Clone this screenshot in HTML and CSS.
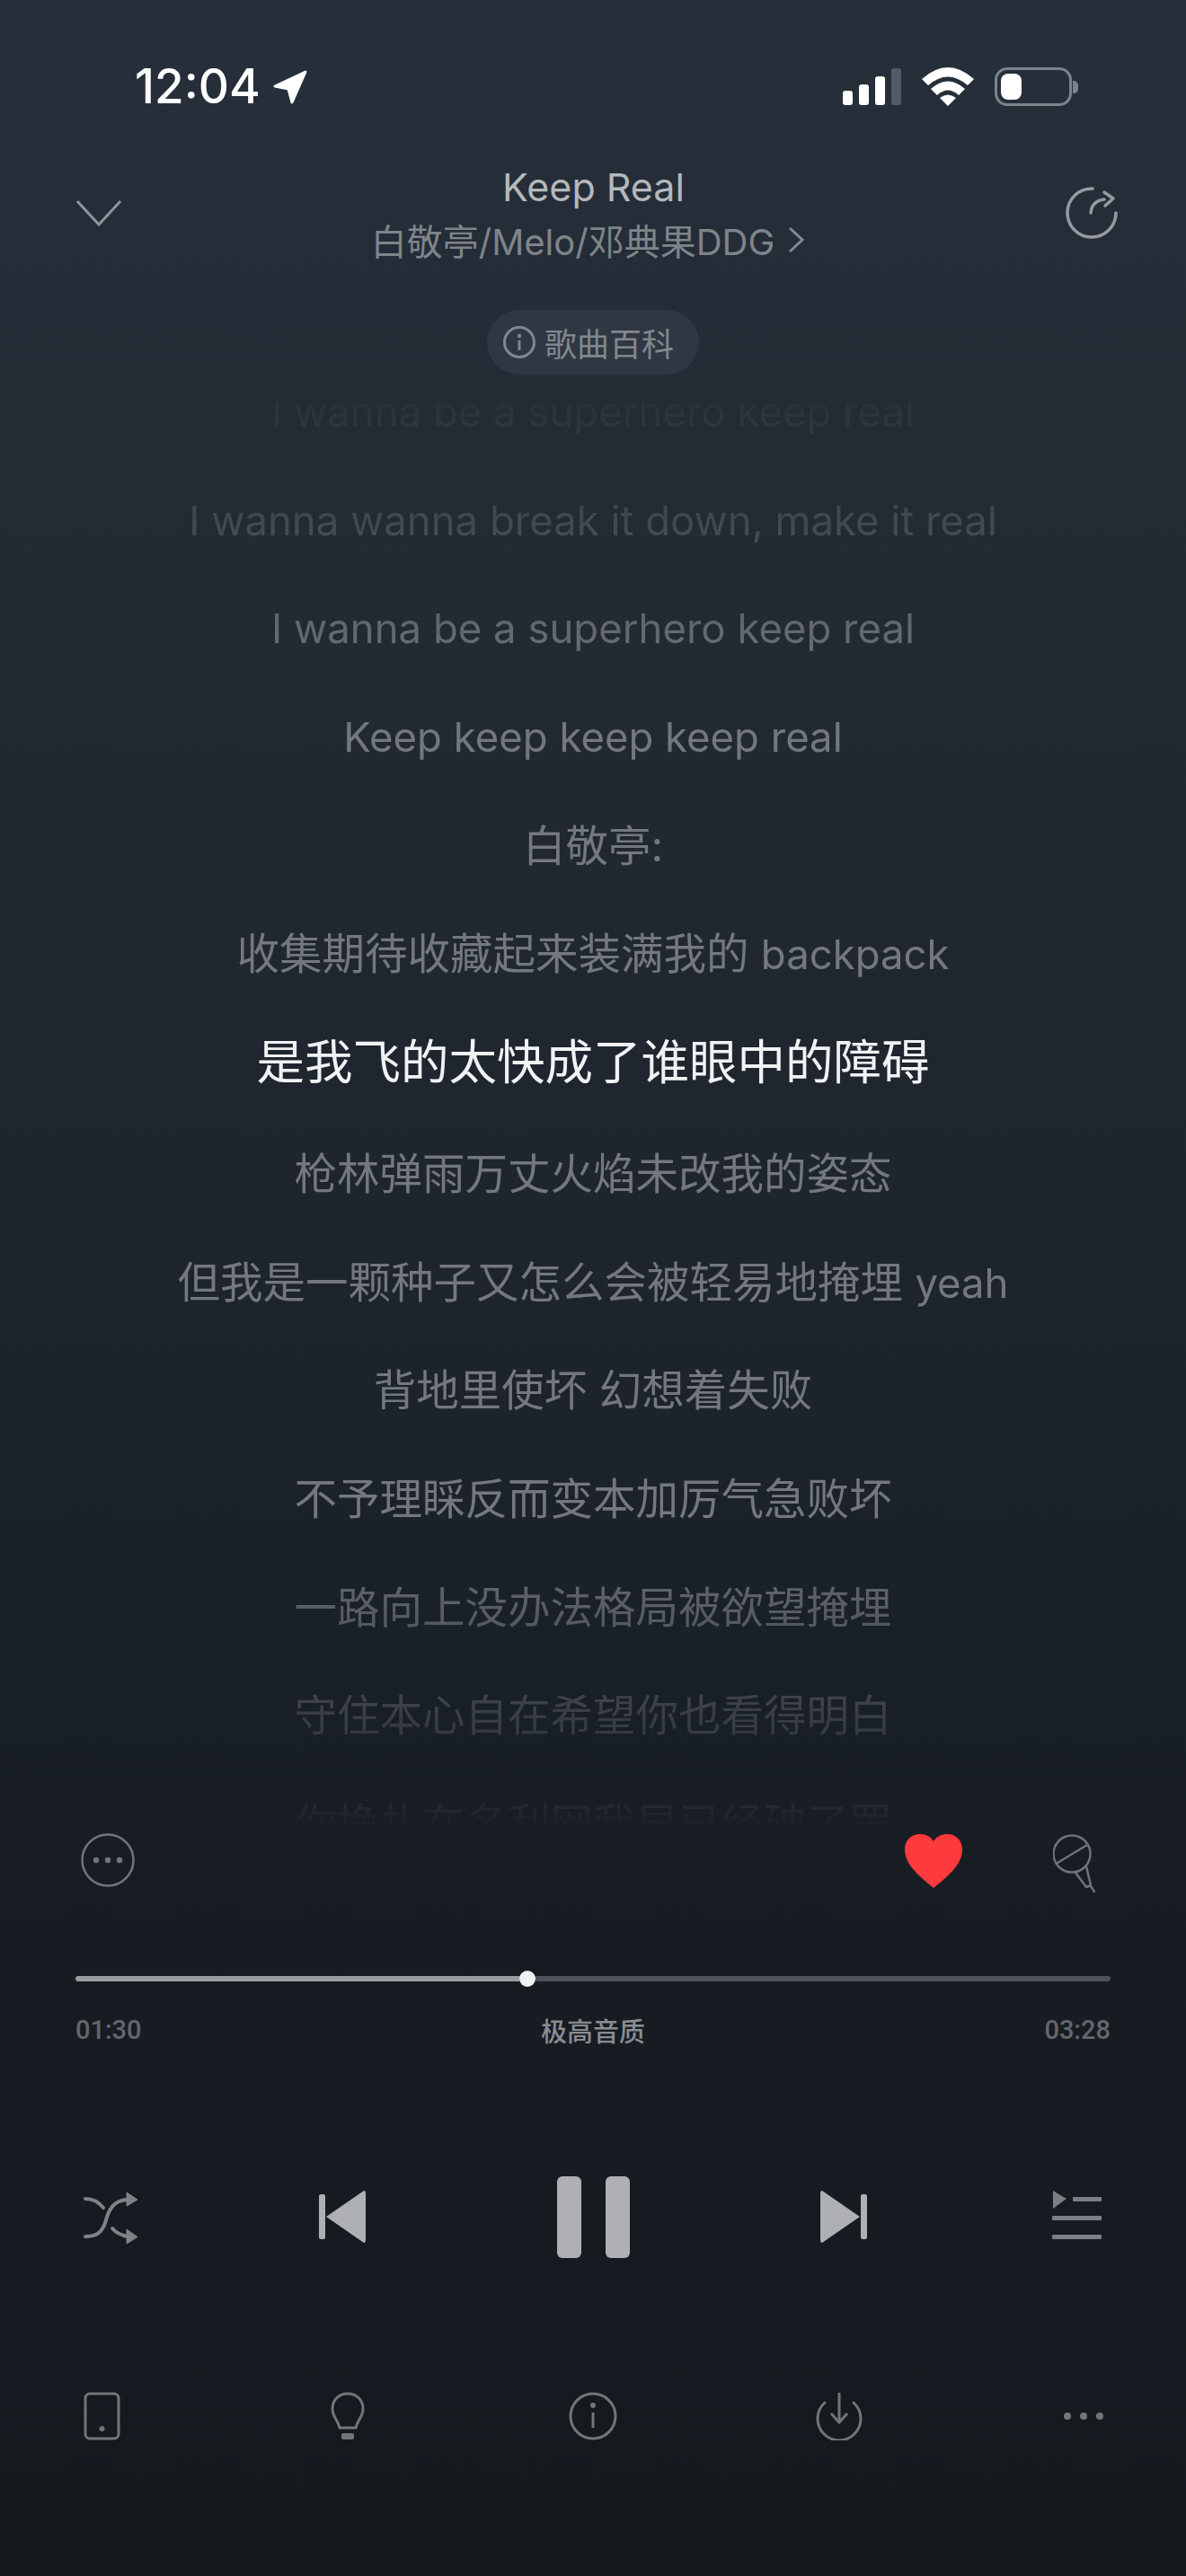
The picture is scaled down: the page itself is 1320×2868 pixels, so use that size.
FILE: index.html
```html
<!DOCTYPE html>
<html>
  <head>
    <meta name="viewport" content="width=device-width, initial-scale=1.0" />
    <title>Keep Real</title>
    <link rel="stylesheet" href="styles.css">
  </head>

  <body>
    <div class="screen">
      <!--status bar-->
      <div class="status-bar">
        <div class="status-left">
          <span class="clock">12:04</span>
          <svg class="location" width="40" height="40" viewBox="0 0 40 40"><path d="M37 3 L3 19 L18 22 L22 37 Z" fill="#fff" stroke="#fff" stroke-width="3" stroke-linejoin="round"/></svg>
        </div>
        <div class="status-right">
          <div class="signal">
            <span class="bar bar-1"></span>
            <span class="bar bar-2"></span>
            <span class="bar bar-3"></span>
            <span class="bar bar-4"></span>
          </div>
          <svg class="wifi" width="58" height="43" viewBox="0 0 58 43"><path d="M0 13 Q29 -13 58 13 L51 20 Q29 1 7 20 Z" fill="#fff"/><path d="M10 24 Q29 7 48 24 L41 31 Q29 20 17 31 Z" fill="#fff"/><path d="M20 34 Q29 27 38 34 L29 43 Z" fill="#fff"/></svg>
          <div class="battery">
            <div class="battery-body"><span class="battery-level"></span></div>
            <span class="battery-nub"></span>
          </div>
        </div>
      </div>

      <!--song header-->
      <div class="song-header">
        <svg class="header-icon" width="52" height="30" viewBox="0 0 52 30"><path d="M2 2 L26 28 L50 2" fill="none" stroke="#8f949a" stroke-width="3"/></svg>
        <div class="song-info">
          <div class="song-title">Keep Real</div>
          <div class="song-artist">
            <span>白敬亭/Melo/邓典果DDG</span>
            <svg width="20" height="30" viewBox="0 0 20 30"><path d="M3 2 L17 15 L3 28" fill="none" stroke="#84898f" stroke-width="3"/></svg>
          </div>
        </div>
        <svg class="header-icon" width="60" height="60" viewBox="0 0 60 60"><path d="M31 3 A27 27 0 1 0 57 30" fill="none" stroke="#969a9f" stroke-width="3.5" stroke-linecap="round"/><path d="M29 30 Q30 17 44 15 M44 7 L54 14 L45 22" fill="none" stroke="#969a9f" stroke-width="3.5" stroke-linecap="round" stroke-linejoin="round"/></svg>
      </div>

      <div class="wiki-row">
        <div class="wiki-pill">
          <svg width="38" height="38" viewBox="0 0 38 38"><circle cx="19" cy="19" r="16.5" fill="none" stroke="#82878e" stroke-width="3"/><circle cx="19" cy="12" r="2.2" fill="#82878e"/><path d="M19 17 V28" stroke="#82878e" stroke-width="3"/></svg>
          <span>歌曲百科</span>
        </div>
      </div>

      <!--lyrics-->
      <div class="lyrics">
        <div class="lyric-line latin">I wanna be a superhero keep real</div>
        <div class="lyric-line latin">I wanna wanna break it down, make it real</div>
        <div class="lyric-line latin">I wanna be a superhero keep real</div>
        <div class="lyric-line latin">Keep keep keep keep real</div>
        <div class="lyric-line">白敬亭:</div>
        <div class="lyric-line">收集期待收藏起来装满我的 <span class="latin">backpack</span></div>
        <div class="lyric-line current">是我飞的太快成了谁眼中的障碍</div>
        <div class="lyric-line">枪林弹雨万丈火焰未改我的姿态</div>
        <div class="lyric-line">但我是一颗种子又怎么会被轻易地掩埋 <span class="latin">yeah</span></div>
        <div class="lyric-line">背地里使坏 幻想着失败</div>
        <div class="lyric-line">不予理睬反而变本加厉气急败坏</div>
        <div class="lyric-line">一路向上没办法格局被欲望掩埋</div>
        <div class="lyric-line">守住本心自在希望你也看得明白</div>
        <div class="lyric-line">你挣扎在名利网我早已经破了罢</div>
      </div>

      <!--like, comment etc-->
      <div class="action-row">
        <svg width="60" height="60" viewBox="0 0 60 60"><circle cx="30" cy="30" r="28.5" fill="none" stroke="#72767b" stroke-width="2.5"/><circle cx="17" cy="30" r="3.2" fill="#72767b"/><circle cx="30" cy="30" r="3.2" fill="#72767b"/><circle cx="43" cy="30" r="3.2" fill="#72767b"/></svg>
        <svg class="heart" width="64" height="60" viewBox="0 0 64 60"><path d="M32 60 C12 44 0 32 0 17 C0 6 8 0 17 0 C24 0 29 3 32 8 C35 3 40 0 47 0 C56 0 64 6 64 17 C64 32 52 44 32 60 Z" fill="#fd3a3c"/></svg>
        <svg class="mic" width="48" height="66" viewBox="0 0 48 66"><circle cx="21" cy="23" r="20.5" fill="none" stroke="#6f7276" stroke-width="2.5"/><path d="M5 33 L38 13 M25 44 L37 60 L42 58 L37 37 M42 59 L46 65" fill="none" stroke="#6f7276" stroke-width="2.5" stroke-linecap="round" stroke-linejoin="round"/></svg>
      </div>

      <!--progress-->
      <div class="progress">
        <div class="progress-fill"></div>
        <div class="progress-thumb"></div>
        <div class="progress-rest"></div>
      </div>
      <div class="progress-labels">
        <span>01:30</span>
        <span class="quality">极高音质</span>
        <span>03:28</span>
      </div>

      <!--player controls-->
      <div class="controls">
        <svg width="60" height="60" viewBox="0 0 60 60"><path d="M2 9 Q14 9 22 19 M2 51 C14 51 20 47 24 36 C28 20 34 11 48 10 M32 42 Q38 49 49 51" fill="none" stroke="#7f8387" stroke-width="4" stroke-linecap="round"/><path d="M48 2 L60 10 L48 17 Z M48 43 L60 51.5 L48 59 Z" fill="#7f8387" stroke="#7f8387" stroke-width="1" stroke-linejoin="round"/></svg>
        <svg width="60" height="60" viewBox="0 0 60 60"><rect x="4" y="4" width="7" height="50" rx="2" fill="#aeb0b3"/><path d="M12 29 L54 0 Q56 0 56 4 V54 Q56 58 54 58 Z" fill="#aeb0b3"/></svg>
        <div class="pause">
          <span class="pause-bar"></span>
          <span class="pause-bar"></span>
        </div>
        <svg width="60" height="60" viewBox="0 0 60 60"><rect x="49" y="4" width="7" height="50" rx="2" fill="#aeb0b3"/><path d="M48 29 L6 0 Q4 0 4 4 V54 Q4 58 6 58 Z" fill="#aeb0b3"/></svg>
        <svg width="60" height="60" viewBox="0 0 60 60"><path d="M5 0 L20 9 L5 20 Z" fill="#7b7f84"/><rect x="27" y="7" width="32" height="5" rx="1" fill="#7b7f84"/><rect x="4" y="28" width="55" height="5" rx="1" fill="#7b7f84"/><rect x="4" y="49" width="55" height="5" rx="1" fill="#7b7f84"/></svg>
      </div>

      <!--bottom row-->
      <div class="tool-row">
        <svg width="60" height="54" viewBox="0 0 60 54"><rect x="11" y="2" width="37" height="50" rx="5" fill="none" stroke="#72767b" stroke-width="3"/><circle cx="29.5" cy="41" r="3" fill="#72767b"/></svg>
        <svg width="60" height="54" viewBox="0 0 60 54"><path d="M30 2 C20 2 13 9 13 19 C13 28 19 31 21 40 H39 C41 31 47 28 47 19 C47 9 40 2 30 2 Z" fill="none" stroke="#72767b" stroke-width="3"/><rect x="23" y="46" width="14" height="7" rx="2" fill="#72767b"/></svg>
        <svg width="60" height="54" viewBox="0 0 60 54"><circle cx="30" cy="27" r="25" fill="none" stroke="#72767b" stroke-width="3"/><circle cx="30" cy="15" r="3" fill="#72767b"/><path d="M30 23 V40" stroke="#72767b" stroke-width="3"/></svg>
        <svg width="60" height="54" viewBox="0 0 60 54"><path d="M15 12 A24 24 0 1 0 47 12" fill="none" stroke="#72767b" stroke-width="3" stroke-linecap="round"/><path d="M31 1 V32 M22 24 L31 34 L40 24" fill="none" stroke="#72767b" stroke-width="3"/></svg>
        <svg width="60" height="54" viewBox="0 0 60 54"><circle cx="12" cy="27" r="4" fill="#72767b"/><circle cx="30" cy="27" r="4" fill="#72767b"/><circle cx="48" cy="27" r="4" fill="#72767b"/></svg>
      </div>
    </div>
  </body>
</html>
```

FILE: styles.css
```css
* {
  box-sizing: border-box;
}

body {
  margin: 0;
  font-family: Inter, "Noto Sans CJK SC", sans-serif;
}

svg {
  display: block;
  flex: none;
}

/*whole phone screen:*/
.screen {
  width: 1320px;
  height: 2868px;
  overflow: hidden;
  display: flex;
  flex-direction: column;
  background: linear-gradient(180deg, #262f3a 0%, #232b35 18%, #1c232b 55%, #181d24 72%, #14191e 100%);
}

/*status bar:*/
.status-bar {
  display: flex;
  justify-content: space-between;
  align-items: center;
  height: 43px;
  margin-top: 75px;
  padding: 0 120px 0 150px;
}

.status-left {
  display: flex;
  align-items: center;
  gap: 13px;
}

.clock {
  color: #fff;
  font-size: 53px;
  font-weight: 500;
  line-height: 43px;
}

.status-right {
  display: flex;
  align-items: center;
  gap: 23px;
}

.signal {
  display: flex;
  align-items: flex-end;
  gap: 7px;
  height: 41px;
}

.bar {
  width: 11px;
  border-radius: 3px;
  background-color: #fff;
}

.bar-1 {
  height: 16px;
}

.bar-2 {
  height: 23px;
}

.bar-3 {
  height: 32px;
}

.bar-4 {
  height: 41px;
  background-color: #535c66;
}

.battery {
  display: flex;
  align-items: center;
  gap: 1px;
}

.battery-body {
  width: 86px;
  height: 43px;
  padding: 4px;
  border: 3px solid #7c838b;
  border-radius: 14px;
}

.battery-level {
  display: block;
  width: 23px;
  height: 100%;
  border-radius: 8px;
  background-color: #fff;
}

.battery-nub {
  width: 6px;
  height: 14px;
  border-radius: 0 5px 5px 0;
  background-color: #7c838b;
}

/*song header:*/
.song-header {
  display: flex;
  justify-content: space-between;
  align-items: center;
  height: 110px;
  margin-top: 67px;
  padding: 0 75px 0 84px;
}

.header-icon {
  margin-bottom: 6px;
}

.song-info {
  display: flex;
  flex-direction: column;
  align-items: center;
  gap: 10px;
  margin-bottom: 4px;
}

.song-title {
  color: #b5b8bb;
  font-size: 43px;
  line-height: 48px;
}

.song-artist {
  display: flex;
  align-items: center;
  gap: 14px;
  height: 50px;
  padding-right: 12px;
  color: #7f848a;
  font-size: 40px;
}

.wiki-row {
  display: flex;
  justify-content: center;
  margin-top: 50px;
}

.wiki-pill {
  display: flex;
  align-items: center;
  gap: 9px;
  height: 72px;
  padding: 0 28px 0 17px;
  border-radius: 36px;
  background-color: #2f3742;
  color: #82878e;
  font-size: 36px;
}

/*lyrics list, faded at both ends:*/
.lyrics {
  height: 1590px;
  margin-top: 30px;
  overflow: hidden;
  -webkit-mask-image: linear-gradient(180deg, rgba(0, 0, 0, 0.08) 0%, rgba(0, 0, 0, 0.39) 8.5%, rgba(0, 0, 0, 0.8) 16%, #000 23.6%, #000 78%, rgba(0, 0, 0, 0.7) 84.4%, rgba(0, 0, 0, 0.35) 92%, rgba(0, 0, 0, 0.12) 98.4%, transparent 100%);
  mask-image: linear-gradient(180deg, rgba(0, 0, 0, 0.08) 0%, rgba(0, 0, 0, 0.39) 8.5%, rgba(0, 0, 0, 0.8) 16%, #000 23.6%, #000 78%, rgba(0, 0, 0, 0.7) 84.4%, rgba(0, 0, 0, 0.35) 92%, rgba(0, 0, 0, 0.12) 98.4%, transparent 100%);
}

.lyric-line {
  height: 120.7px;
  color: #74787e;
  font-size: 47.5px;
  line-height: 120.7px;
  text-align: center;
  white-space: nowrap;
}

.latin {
  font-size: 45.5px;
}

.lyric-line:first-child {
  margin-top: -48px;
}

.lyric-line.current {
  margin-bottom: 3px;
  color: #f1f2f3;
  font-size: 53.5px;
}

/*action icons under the lyrics:*/
.action-row {
  display: flex;
  align-items: flex-start;
  height: 66px;
  margin-top: 4px;
  padding: 0 100px 0 90px;
}

.heart {
  margin-left: auto;
  margin-right: 101px;
  margin-top: 1px;
}

/*progress bar:*/
.progress {
  display: flex;
  align-items: center;
  height: 18px;
  margin: 87px 84px 0;
}

.progress-fill {
  width: 494px;
  height: 6px;
  border-radius: 3px 0 0 3px;
  background-color: #9a9ea1;
}

.progress-thumb {
  width: 18px;
  height: 18px;
  border-radius: 50%;
  background-color: #f2f2f2;
}

.progress-rest {
  flex: 1;
  height: 6px;
  border-radius: 0 3px 3px 0;
  background-color: #4e5258;
}

.progress-labels {
  display: flex;
  justify-content: space-between;
  align-items: center;
  height: 30px;
  margin: 33px 84px 0;
  color: #63676c;
  font-family: Roboto, sans-serif;
  font-size: 29px;
  font-weight: 500;
}

.quality {
  color: #8a8d90;
  font-family: "Noto Sans CJK SC", sans-serif;
  font-size: 29px;
}

/*player controls:*/
.controls {
  display: flex;
  align-items: center;
  gap: 198px;
  height: 91px;
  margin-top: 148px;
  padding: 0 93px;
}

.pause {
  display: flex;
  justify-content: center;
  gap: 27px;
  width: 102px;
}

.pause-bar {
  width: 27px;
  height: 91px;
  border-radius: 6px;
  background-color: #aeb0b3;
}

.tool-row {
  display: flex;
  justify-content: space-between;
  margin-top: 149px;
  padding: 0 84px;
}
```
